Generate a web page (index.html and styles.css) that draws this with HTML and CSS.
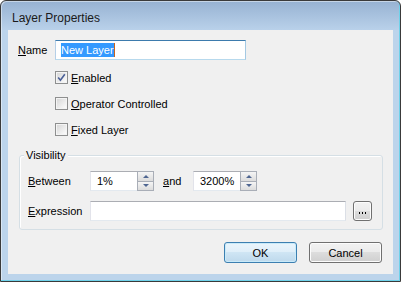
FILE: index.html
```html
<!DOCTYPE html>
<html lang="en">
<head>
    <meta charset="UTF-8">
    <title>Layer Properties</title>
    <link rel="stylesheet" href="styles.css">
</head>
<body>

<div class="window">
    <div class="titlebar">Layer Properties</div>

    <div class="client">
        <!-- Name -->
        <div class="name-row">
            <label class="name-label"><u>N</u>ame</label>
            <div class="textbox focus"><span class="sel">New Layer</span></div>
        </div>

        <!-- Flags -->
        <div class="checks">
            <div class="check">
                <span class="box">
                    <svg width="11" height="11" viewBox="0 0 11 11">
                        <path d="M2.2 5.6 L4.4 8.2 L8.8 2.2" fill="none" stroke="#4a5f97" stroke-width="1.6"/>
                    </svg>
                </span>
                <span><u>E</u>nabled</span>
            </div>
            <div class="check">
                <span class="box"></span>
                <span><u>O</u>perator Controlled</span>
            </div>
            <div class="check">
                <span class="box"></span>
                <span><u>F</u>ixed Layer</span>
            </div>
        </div>

        <!-- Visibility group -->
        <div class="group">
            <div class="legend">Visibility</div>
            <div class="vis-row">
                <span class="vis-label"><u>B</u>etween</span>
                <div class="spin">
                    <span class="spin-val">1%</span>
                    <div class="spin-btns">
                        <span class="spin-btn"><i class="arrow up"></i></span>
                        <span class="spin-btn"><i class="arrow down"></i></span>
                    </div>
                </div>
                <span class="and-label"><u>a</u>nd</span>
                <div class="spin">
                    <span class="spin-val">3200%</span>
                    <div class="spin-btns">
                        <span class="spin-btn"><i class="arrow up"></i></span>
                        <span class="spin-btn"><i class="arrow down"></i></span>
                    </div>
                </div>
            </div>
            <div class="vis-row second">
                <span class="vis-label"><u>E</u>xpression</span>
                <div class="textbox expr"></div>
                <button class="btn dots"><i></i><i></i><i></i></button>
            </div>
        </div>

        <!-- Dialog buttons -->
        <div class="buttons">
            <button class="btn default">OK</button>
            <button class="btn">Cancel</button>
        </div>
    </div>
</div>

</body>
</html>
```

FILE: styles.css
```css
* {
    box-sizing: border-box;
}
body {
    margin: 0;
    font-family: "Liberation Sans", Arial, sans-serif;
    font-size: 11px;
    color: #000;
    background: #fff;
}
u {
    text-decoration: underline;
    text-underline-offset: 1px;
}
.window {
    width: 401px;
    height: 282px;
    border: 1px solid #3a3a3a;
    border-radius: 6px 6px 0 0;
    background: linear-gradient(to bottom, #97b2d2 0, #b9d1ea 29px, #bcd4eb 29px);
    box-shadow: inset -1px -1px 0 #6fd2ea, inset 1px 1px 0 rgba(255, 255, 255, 0.45);
    padding: 0 7px 7px;
    display: flex;
    flex-direction: column;
}
.titlebar {
    height: 29px;
    padding: 3px 0 0 4px;
    line-height: 28px;
    font-size: 12px;
    color: #1a1a1a;
}
.client {
    flex: 1;
    background: #f0f0f0;
    display: flex;
    flex-direction: column;
}
.name-row {
    display: flex;
    align-items: center;
    margin-top: 10px;
    padding-left: 10px;
}
.name-label {
    width: 37px;
}
.textbox {
    height: 20px;
    background: #fff;
    border: 1px solid;
    border-color: #abadb3 #dbdfe6 #e3e9ef #e2e3ea;
    display: flex;
    align-items: center;
}
.textbox.focus {
    width: 191px;
    padding-left: 5px;
    border-color: #3d7bad #a4c9e3 #b7d9ed #b5cfe7;
}
.sel {
    background: #3399ff;
    color: #fff;
    line-height: 14px;
    border-right: 1px solid #c8641e;
}
.checks {
    margin: 11px 0 0 47px;
    display: flex;
    flex-direction: column;
    gap: 13px;
}
.check {
    display: flex;
    align-items: center;
    height: 13px;
    gap: 3px;
}
.box {
    width: 13px;
    height: 13px;
    border: 1px solid #8e8f8f;
    background: linear-gradient(135deg, #d4d4d4, #f2f2f2 70%, #ffffff);
    box-shadow: inset 0 0 0 1px #f4f4f4;
    display: flex;
    align-items: center;
    justify-content: center;
}
.group {
    margin: 19px 0 0 11px;
    width: 364px;
    height: 75px;
    border: 1px solid #d5dfe5;
    border-radius: 3px;
    box-shadow: inset 1px 1px 0 #fff;
    padding: 0 0 0 8px;
}
.legend {
    width: max-content;
    height: 14px;
    line-height: 14px;
    margin: -8px 0 0 -4px;
    padding: 0 2px;
    background: #f0f0f0;
}
.vis-row {
    display: flex;
    align-items: center;
    height: 20px;
    margin-top: 9px;
}
.vis-row.second {
    margin-top: 10px;
}
.vis-label {
    width: 62px;
}
.and-label {
    width: 30px;
    margin-left: 9px;
}
.spin {
    width: 64px;
    height: 20px;
    display: flex;
    background: #fff;
    border: 1px solid;
    border-color: #abadb3 #dbdfe6 #e3e9ef #e2e3ea;
}
.spin-val {
    flex: 1;
    padding-left: 6px;
    line-height: 18px;
}
.spin-btns {
    width: 17px;
    display: flex;
    flex-direction: column;
    border: 1px solid #a9aeb7;
    margin: -1px -1px -1px 0;
}
.spin-btn {
    flex: 1;
    background: linear-gradient(to bottom, #f5f5f5, #dcdcdc);
    display: flex;
    align-items: center;
    justify-content: center;
}
.spin-btn + .spin-btn {
    border-top: 1px solid #a9aeb7;
}
.arrow {
    width: 0;
    height: 0;
    border-left: 3px solid transparent;
    border-right: 3px solid transparent;
}
.arrow.up {
    border-bottom: 3px solid #4f6691;
}
.arrow.down {
    border-top: 3px solid #4f6691;
}
.textbox.expr {
    width: 256px;
}
.btn {
    font-family: inherit;
    font-size: 11px;
    color: #000;
    border: 1px solid #707070;
    border-radius: 3px;
    background: linear-gradient(to bottom, #f2f2f2 0, #ebebeb 50%, #dddddd 50%, #cfcfcf 100%);
    box-shadow: inset 0 0 0 1px #fcfcfc;
    padding: 0;
}
.btn.dots {
    width: 19px;
    height: 20px;
    margin-left: 7px;
    display: flex;
    justify-content: center;
    align-items: flex-end;
    gap: 2px;
    padding-bottom: 6px;
}
.btn.dots i {
    width: 1px;
    height: 2px;
    background: #000;
}
.buttons {
    display: flex;
    justify-content: flex-end;
    gap: 12px;
    margin-top: 12px;
    padding-right: 11px;
}
.buttons .btn {
    width: 73px;
    height: 21px;
}
.btn.default {
    border-color: #3c7fb1;
    background: linear-gradient(to bottom, #eaf5fc 0, #dfeef9 50%, #cfe5f4 50%, #bed9ec 100%);
    box-shadow: inset 0 0 0 1px #c9eaf9;
}
```
